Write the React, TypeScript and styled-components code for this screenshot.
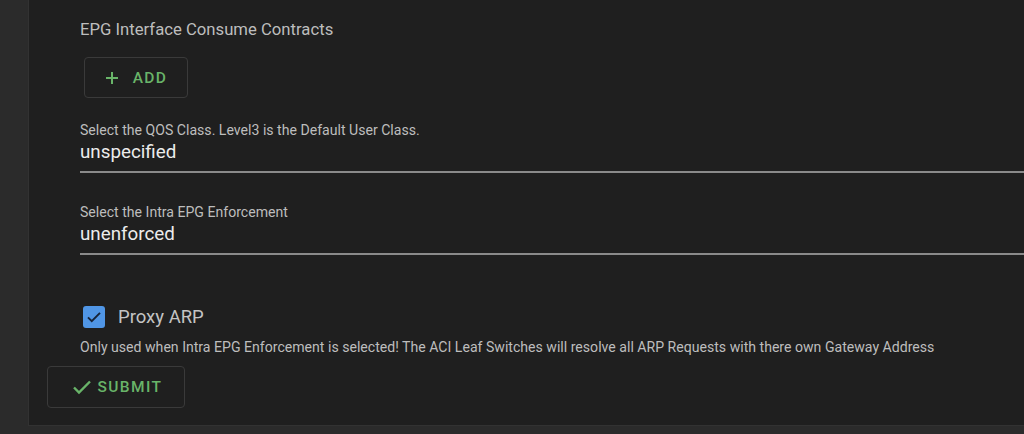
import React from 'react';
import styled, { createGlobalStyle } from 'styled-components';

const GlobalStyle = createGlobalStyle`
  * { box-sizing: border-box; }
  html, body { margin: 0; padding: 0; background: #2b2b2b; }
  body { font-family: Roboto, "Noto Sans", Arial, sans-serif; }
`;

const Page = styled.div`
  display: flex;
  height: 434px;
  padding-left: 28px;
  background: #2b2b2b;
  overflow: hidden;
`;

const Panel = styled.section`
  flex: 1;
  height: 426px;
  background: #1f1f1f;
  border-left: 1px solid #323232;
  border-bottom: 1px solid #323232;
  padding: 18px 0 0 18px;
  display: flex;
  flex-direction: column;
`;

const Form = styled.div`
  display: flex;
  flex-direction: column;
  padding-left: 33px;
`;

const Title = styled.div`
  font-size: 16.7px;
  line-height: 24px;
  color: #bdbdbd;
`;

const OutlineButton = styled.button<{ $mt: number; $ml: number; $w: number; $h: number }>`
  display: flex;
  align-items: center;
  justify-content: center;
  gap: ${(p) => (p.$w > 120 ? 4 : 14)}px;
  width: ${(p) => p.$w}px;
  height: ${(p) => p.$h}px;
  margin-top: ${(p) => p.$mt}px;
  margin-left: ${(p) => p.$ml}px;
  background: transparent;
  border: 1px solid #3a3a3a;
  border-radius: 4px;
  color: #69b469;
  font-family: Roboto, Arial, sans-serif;
  font-size: 15.5px;
  font-weight: 500;
  letter-spacing: 1.4px;
  padding: 0;
  cursor: pointer;
`;

const Field = styled.div<{ $mt: number }>`
  margin-top: ${(p) => p.$mt}px;
  display: flex;
  flex-direction: column;
  border-bottom: 2px solid #8a8a8a;
  padding-bottom: 7px;
`;

const FieldLabel = styled.label`
  font-size: 14.1px;
  line-height: 16px;
  color: #bdbdbd;
  margin-bottom: 2px;
`;

const FieldValue = styled.div`
  font-size: 18.8px;
  line-height: 24px;
  color: #ececec;
`;

const CheckRow = styled.label`
  display: flex;
  align-items: center;
  gap: 13px;
  height: 24px;
  margin-top: 50px;
  margin-left: 3px;
  color: #c4c4c4;
  font-size: 18.5px;
`;

const CheckBox = styled.span`
  display: flex;
  align-items: center;
  justify-content: center;
  width: 22px;
  height: 22px;
  border-radius: 3px;
  background: #5096e6;
`;

const Helper = styled.div`
  margin-top: 8px;
  font-size: 14.1px;
  line-height: 20px;
  color: #bdbdbd;
`;

const Plus = () => (
  <svg width="14" height="14" viewBox="0 0 14 14">
    <path d="M7 1v12M1 7h12" stroke="#69b469" strokeWidth="2" />
  </svg>
);

const Check = ({ size, color, w }: { size: number; color: string; w: number }) => (
  <svg width={size} height={size} viewBox="0 0 24 24">
    <path d="M4 12.5l5 5L20 6.5" fill="none" stroke={color} strokeWidth={w} />
  </svg>
);

export default function App() {
  return (
    <>
      <GlobalStyle />
      <Page>
        <Panel>
          <Form>
            <Title>EPG Interface Consume Contracts</Title>
            <OutlineButton $mt={15} $ml={4} $w={104} $h={41}>
              <Plus />
              <span>ADD</span>
            </OutlineButton>
            <Field $mt={24}>
              <FieldLabel>Select the QOS Class. Level3 is the Default User Class.</FieldLabel>
              <FieldValue>unspecified</FieldValue>
            </Field>
            <Field $mt={31}>
              <FieldLabel>Select the Intra EPG Enforcement</FieldLabel>
              <FieldValue>unenforced</FieldValue>
            </Field>
            <CheckRow>
              <CheckBox>
                <Check size={18} color="#16243a" w={2.6} />
              </CheckBox>
              Proxy ARP
            </CheckRow>
            <Helper>
              Only used when Intra EPG Enforcement is selected! The ACI Leaf Switches will resolve all ARP Requests with
              there own Gateway Address
            </Helper>
          </Form>
          <OutlineButton $mt={9} $ml={0} $w={138} $h={42}>
            <Check size={24} color="#69b469" w={2.4} />
            <span>SUBMIT</span>
          </OutlineButton>
        </Panel>
      </Page>
    </>
  );
}
